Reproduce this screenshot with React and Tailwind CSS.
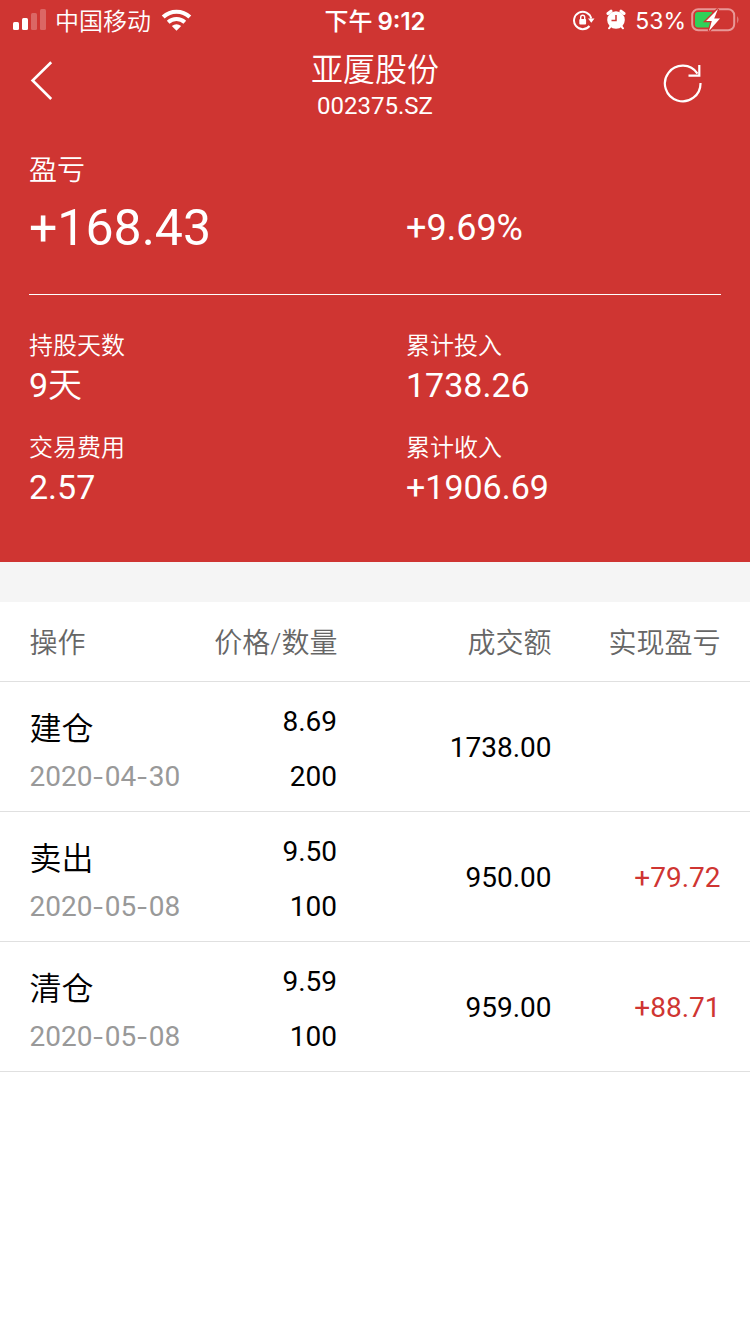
import React from "react";

const trades = [
  { action: "建仓", date: ["2020", "04", "30"], price: "8.69", count: "200", amount: "1738.00", profit: "" },
  { action: "卖出", date: ["2020", "05", "08"], price: "9.50", count: "100", amount: "950.00", profit: "+79.72" },
  { action: "清仓", date: ["2020", "05", "08"], price: "9.59", count: "100", amount: "959.00", profit: "+88.71" },
];

function Hyphen() {
  return <span className="inline-block w-[12.4px] scale-x-125 text-center">-</span>;
}

function StatusBar() {
  return (
    <div className="grid h-10 grid-cols-3 items-center font-['Inter','Noto_Sans_CJK_SC',sans-serif]">
      <div className="flex items-center pl-[13px]">
        <svg width="33" height="22" viewBox="0 0 33 22" fill="#fff">
          <rect x="0" y="13" width="6" height="8" rx="1.5" />
          <rect x="9" y="9" width="6" height="12" rx="1.5" />
          <rect x="18" y="4" width="6" height="17" rx="1.5" opacity=".25" />
          <rect x="27" y="0" width="6" height="21" rx="1.5" opacity=".25" />
        </svg>
        <span className="ml-[9px] pt-[3px] text-[24px] leading-[37px] font-[350]">中国移动</span>
        <svg className="ml-[9.500px]" width="31" height="22" viewBox="0 0 31 22" fill="none" stroke="#fff">
          <path d="M2.200 8 A19.500 19.500 0 0 1 28.800 8" strokeWidth="4.200" />
          <path d="M7.200 13.200 A12.300 12.300 0 0 1 23.800 13.200" strokeWidth="4" />
          <path d="M10.800 17 Q15.500 13.500 20.200 17 L15.500 21.700 Z" fill="#fff" stroke="none" />
        </svg>
      </div>
      <div className="flex items-center justify-center gap-[5px] pt-[3px] leading-[37px] font-medium">
        <span className="text-[24px]">下午</span>
        <span className="text-[24px] font-semibold">9:12</span>
      </div>
      <div className="flex items-center justify-end pr-[10px]">
        <svg width="22" height="22" viewBox="0 0 22 22" fill="none" stroke="#fff">
          <path d="M16.500 17 A8.700 8.700 0 1 1 18.200 9.500" strokeWidth="2" />
          <path d="M15 9.500 H21.500 L18.300 13.800 Z" fill="#fff" stroke="none" />
          <rect x="6.300" y="10" width="6.800" height="5.500" rx="1" fill="#fff" stroke="none" />
          <path d="M7.700 10.500 V8.300 a2 2 0 0 1 4 0 V10.500" strokeWidth="1.400" />
        </svg>
        <svg className="ml-[11px]" width="20" height="22" viewBox="0 0 20 22">
          <circle cx="10" cy="11" r="8.800" fill="#fff" />
          <path d="M2 4.500 L5 2.200 M15 2.200 L18 4.500" fill="none" stroke="#fff" strokeWidth="3" strokeLinecap="round" />
          <path d="M4.500 17.500 L3 19.300 M15.500 17.500 L17 19.300" stroke="#fff" strokeWidth="2" strokeLinecap="round" />
          <path d="M10 6 V11.600 H5.500" fill="none" stroke="#cf3532" strokeWidth="1.500" />
        </svg>
        <span className="ml-[9px] pt-[2px] text-[23px] leading-[38px]">53%</span>
        <svg className="ml-[5px]" width="49" height="26" viewBox="0 0 49 26">
          <rect x="1.200" y="2.200" width="42" height="21" rx="6" fill="none" stroke="#e89897" strokeWidth="2" />
          <path d="M46.300 9 q2.200 3.700 0 7.500 Z" fill="#e89897" />
          <path d="M7 5 H21 V20.500 H7 a3 3 0 0 1 -3 -3 V8 a3 3 0 0 1 3 -3Z" fill="#30d158" />
          <path d="M27 2 L15 14 H20.800 L18 24 L29 11.500 H23.200 Z" fill="#fff" stroke="#cf3532" strokeWidth="2.600" paintOrder="stroke" />
        </svg>
      </div>
    </div>
  );
}

function Stat({ label, value, unit }) {
  return (
    <div>
      <div className="text-[24px] leading-8 font-[350]">{label}</div>
      <div className="mt-[3px] text-[34px] leading-10">
        {value}
        {unit && <span className="font-[350]">{unit}</span>}
      </div>
    </div>
  );
}

export default function App() {
  return (
    <div className="flex min-h-[1334px] w-[750px] flex-col bg-white font-['Roboto','Noto_Sans_CJK_SC',sans-serif] text-black">
      <header className="h-[562px] bg-[#cf3532] text-white">
        <StatusBar />
        <nav className="flex h-[88px] items-start justify-between pt-[10px]">
          <button className="ml-[30px] mt-[10px]">
            <svg width="24" height="42" viewBox="0 0 24 42" fill="none" stroke="#fff" strokeWidth="2.600">
              <path d="M21.200 2.300 L2.600 20.500 L21.200 39" />
            </svg>
          </button>
          <div className="ml-[34px] text-center">
            <h1 className="text-[32px] leading-10 font-[350]">亚厦股份</h1>
            <p className="text-[24px] leading-8">002375.SZ</p>
          </div>
          <button className="mr-[46px] mt-[12px]">
            <svg width="42" height="42" viewBox="0 0 42 42" fill="none" stroke="#fff" strokeWidth="2.200">
              <path d="M38.500 21 A17.800 17.800 0 1 1 35.500 11.600" />
              <path d="M37.300 3 V13.600 H26.500" />
            </svg>
          </button>
        </nav>
        <section className="mx-[29px] flex h-[167px] flex-col border-b border-white pt-[23px]">
          <div className="text-[28px] leading-10 font-[350]">盈亏</div>
          <div className="mt-[7px] grid grid-cols-[377px_1fr] items-center leading-[60px]">
            <span className="text-[50px]">+168.43</span>
            <span className="text-[36px]">+9.69%</span>
          </div>
        </section>
        <section className="mx-[29px] grid grid-cols-[377px_1fr] gap-y-[27px] pt-[35px]">
          <Stat label="持股天数" value="9" unit="天" />
          <Stat label="累计投入" value="1738.26" />
          <Stat label="交易费用" value="2.57" />
          <Stat label="累计收入" value="+1906.69" />
        </section>
      </header>
      <div className="h-10 bg-[#f5f5f5]" />
      <main className="text-[28px] leading-10">
        <div className="grid h-20 grid-cols-[170px_138px_214px_169px] items-center border-b border-[#e0e0e0] pl-[29.500px] pt-[5px] font-[350] text-[#666]">
          <span>操作</span>
          <span className="text-right whitespace-nowrap">价格/数量</span>
          <span className="text-right">成交额</span>
          <span className="text-right">实现盈亏</span>
        </div>
        {trades.map((t) => (
          <div
            key={t.action}
            className="grid h-[130px] grid-cols-[169.500px_138px_214.500px_169px] items-center border-b border-[#e0e0e0] pl-[29.500px]"
          >
            <div className="pt-[8px]">
              <div className="text-[32px] leading-[48px] font-[350]">{t.action}</div>
              <div className="mt-1 whitespace-nowrap text-[#999]">
                {t.date[0]}
                <Hyphen />
                {t.date[1]}
                <Hyphen />
                {t.date[2]}
              </div>
            </div>
            <div className="flex flex-col gap-[15px] pt-[6px] text-right">
              <span>{t.price}</span>
              <span>{t.count}</span>
            </div>
            <span className="pt-[2px] text-right">{t.amount}</span>
            <span className="pt-[2px] text-right text-[#cf3532]">{t.profit}</span>
          </div>
        ))}
      </main>
    </div>
  );
}
